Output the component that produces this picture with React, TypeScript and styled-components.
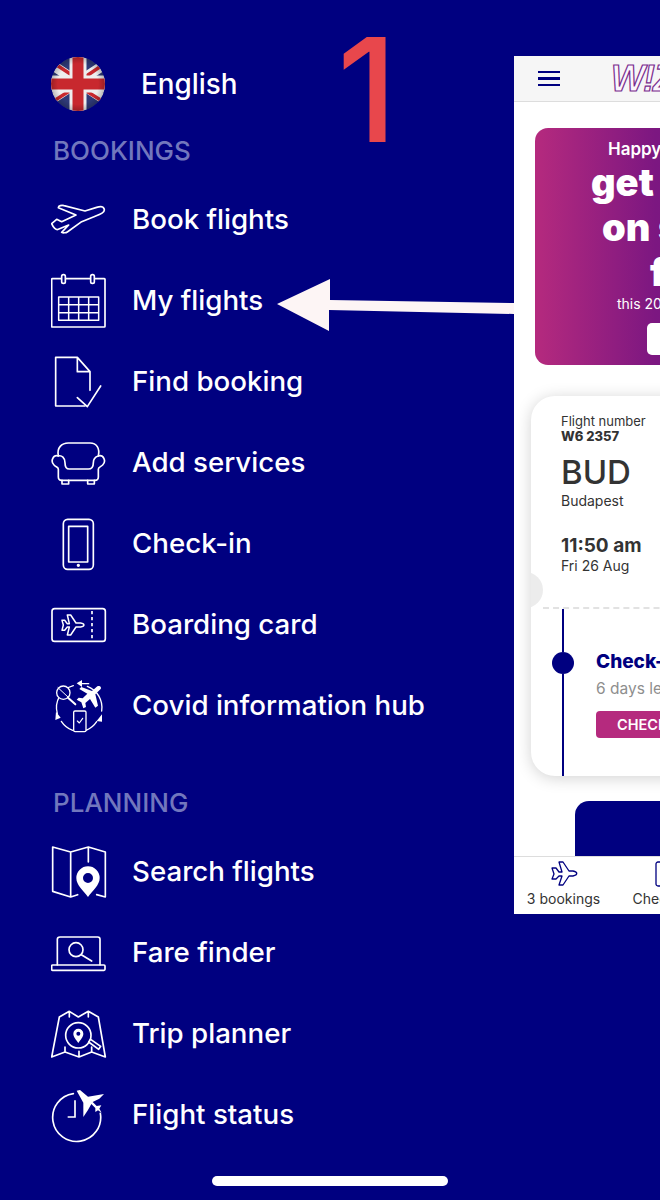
import { FC, ReactNode } from 'react';
import styled, { createGlobalStyle } from 'styled-components';

const GlobalStyle = createGlobalStyle`
	html, body {
		margin: 0;
		padding: 0;
		background: #000080;
	}
	* {
		box-sizing: border-box;
	}
`;

const NAVY = '#000080';
const MAGENTA = '#b52a7e';

interface IIconProps {
	view: string;
	children: ReactNode;
}

// paths are traced at 3x, so every icon is a 168 unit window of that trace
const MenuIcon: FC<IIconProps> = ({ view, children }) => (
	<svg width="56" height="56" viewBox={`${view} 168 168`} fill="none" stroke="#fff" strokeWidth="5" strokeLinejoin="round" strokeLinecap="round">
		{children}
	</svg>
);

const PlaneIcon = () => (
	<MenuIcon view="63 483">
		<path d="M222 533C228 545 205 552 190 558L155 572L112 603C108 606 98 606 95 604L116 582L85 595C78 598 70 590 65 578L80 565L95 572L138 552L85 530C85 524 95 522 102 524L165 540L200 529C210 526 220 527 222 533Z" />
	</MenuIcon>
);

const CalendarIcon = () => (
	<MenuIcon view="63 726">
		<rect x="65" y="743" width="160" height="145" rx="2" />
		<rect x="95" y="731" width="11" height="26" rx="5" fill={NAVY} />
		<rect x="182" y="731" width="11" height="26" rx="5" fill={NAVY} />
		<path d="M86 798H206V868H86ZM86 821H206M86 845H206M116 798V868M146 798V868M176 798V868" strokeWidth="4.5" />
	</MenuIcon>
);

const DocumentIcon = () => (
	<MenuIcon view="63 39">
		<path d="M142 49H77V195H165M180 92V148M142 49L180 92H142Z" />
		<path d="M142 170L172 197L212 135" />
	</MenuIcon>
);

const SofaIcon = () => (
	<MenuIcon view="63 282">
		<path d="M85 345C80 320 95 306 115 306H180C200 306 210 322 205 345" />
		<path d="M85 345C70 340 60 360 72 372C80 380 85 378 85 385V408C85 415 90 418 95 418H195C200 418 205 415 205 408V385C205 378 212 378 218 372C230 360 220 340 205 345C195 348 190 355 190 365C190 378 185 384 175 384H118C108 384 105 375 105 365C105 350 95 342 85 345Z" />
		<path d="M96 418V429H116V418M173 418V429H193V418" />
	</MenuIcon>
);

const PhoneIcon = () => (
	<MenuIcon view="63 525">
		<rect x="100" y="535" width="90" height="150" rx="13" />
		<rect x="116" y="556" width="57" height="107" />
		<circle cx="145" cy="673" r="2.5" fill="#fff" />
	</MenuIcon>
);

const CardIcon = () => (
	<MenuIcon view="63 768">
		<rect x="66" y="803" width="160" height="98" rx="8" />
		<path d="M186 810V895" strokeDasharray="10 8" strokeLinecap="butt" />
		<path d="M96 838H104L112 848H118L112 822H122L138 846H152C165 848 165 856 152 858H138L122 882H112L118 858H112L104 868H96L100 852Z" strokeWidth="4.5" />
	</MenuIcon>
);

const CovidIcon = () => (
	<MenuIcon view="63 1011">
		<path d="M130 1034A68 68 0 0 0 82 1118M94 1141A68 68 0 0 0 128 1168M168 1168A68 68 0 0 0 200 1142M215 1110A68 68 0 0 0 172 1036" strokeWidth="4" />
		<circle cx="100" cy="1055" r="20" strokeWidth="4" fill={NAVY} />
		<path d="M84 1040L116 1070" strokeWidth="3" />
		<path d="M114 1070L136 1090" strokeWidth="6" />
		<path d="M212 1044L196 1060L204 1094L196 1100L180 1074L166 1086L168 1098L160 1102L154 1084L140 1076L146 1070L158 1072L172 1058L148 1044L154 1038L186 1050L202 1036C208 1032 216 1038 212 1044Z" fill="#fff" stroke="none" />
		<path d="M140 1027L156 1017V1038ZM78 1112L92 1130L76 1137ZM216 1120L200 1140L216 1142Z" fill="#fff" stroke="none" />
		<path d="M156 1028H176" strokeWidth="4" />
		<rect x="131" y="1110" width="37" height="62" rx="4" fill={NAVY} strokeWidth="4" />
		<path d="M142 1140L148 1146L158 1132" strokeWidth="3.5" />
	</MenuIcon>
);

const MapPinIcon = () => (
	<MenuIcon view="63 186">
		<path d="M122 210L68 195V328L122 345L143 338M122 210L175 195L226 210V345L200 338M122 210V345M175 195V240" />
		<path fillRule="evenodd" d="M174 345C160 325 139 310 139 288A35 35 0 0 1 209 288C209 310 188 325 174 345ZM174 273A15 15 0 1 0 174 303A15 15 0 1 0 174 273Z" fill="#fff" stroke="none" />
	</MenuIcon>
);

const LaptopIcon = () => (
	<MenuIcon view="63 429">
		<path d="M82 548V472Q82 465 90 465H203Q210 465 210 472V548" />
		<rect x="65" y="549" width="160" height="16" rx="3" />
		<circle cx="138" cy="503" r="21" />
		<path d="M154 518L185 537" />
	</MenuIcon>
);

const TripIcon = () => (
	<MenuIcon view="63 672">
		<path d="M65 825L88 705L118 688L145 705L175 688L205 705L226 825L185 810L147 825L105 810ZM118 688V705M175 688V705M105 810V795M147 825V808M185 810V795" />
		<circle cx="145" cy="760" r="38" fill={NAVY} />
		<path fillRule="evenodd" d="M145 783C138 772 130 765 130 755A15 15 0 0 1 160 755C160 765 152 772 145 783ZM145 749A6 6 0 1 0 145 761A6 6 0 1 0 145 749Z" fill="#fff" stroke="none" />
		<path d="M176 780L182 772L212 793L206 802Z" fill={NAVY} />
	</MenuIcon>
);

const StatusIcon = () => (
	<MenuIcon view="63 915">
		<path d="M130 935A72 72 0 1 0 211 994" />
		<path d="M135 955V1005H113" strokeLinecap="butt" strokeLinejoin="miter" />
		<path d="M140 926L150 924L174 944L222 936L208 950L188 960L200 972L214 970L208 980L215 992L204 985L196 990L196 978L184 966L174 984L160 1005L160 962Z" fill="#fff" stroke="none" />
	</MenuIcon>
);

const FlagBadge = () => (
	<svg width="54" height="54" viewBox="0 0 54 54">
		<defs>
			<clipPath id="flag-clip">
				<circle cx="27" cy="27" r="27" />
			</clipPath>
			<radialGradient id="flag-shade" cx="50%" cy="50%" r="50%">
				<stop offset="75%" stopColor="#000" stopOpacity="0" />
				<stop offset="100%" stopColor="#000" stopOpacity="0.22" />
			</radialGradient>
		</defs>
		<g clipPath="url(#flag-clip)">
			<rect width="54" height="54" fill="#2f3a78" />
			<path d="M-2 6L56 44M-2 44L56 6" stroke="#eee" strokeWidth="10" />
			<path d="M-2 3L24 20M56 47L32 32M-2 47L20 33M56 5L34 20" stroke="#c8282e" strokeWidth="3.5" />
			<path d="M27 0V54M0 27H54" stroke="#eee" strokeWidth="17" />
			<path d="M27 0V54M0 27H54" stroke="#c8282e" strokeWidth="11" />
			<circle cx="27" cy="27" r="27" fill="url(#flag-shade)" />
		</g>
	</svg>
);

const SmallPlane = () => (
	<svg width="28" height="26" viewBox="0 0 28 26" fill="none" stroke={NAVY} strokeWidth="1.3" strokeLinejoin="round">
		<path d="M2 7H6L9 11H12L9 1H13L19 10H23C28 11 28 14 23 15H19L13 24H9L12 15H9L6 18H2L4 13Z" />
	</svg>
);

const SmallPhone = () => (
	<svg width="16" height="26" viewBox="0 0 16 26" fill="none" stroke={NAVY} strokeWidth="1.3">
		<rect x="1" y="1" width="14" height="24" rx="2" />
	</svg>
);

interface IMenuEntry {
	label: string;
	icon: ReactNode;
}

const bookings: IMenuEntry[] = [
	{ label: 'Book flights', icon: <PlaneIcon /> },
	{ label: 'My flights', icon: <CalendarIcon /> },
	{ label: 'Find booking', icon: <DocumentIcon /> },
	{ label: 'Add services', icon: <SofaIcon /> },
	{ label: 'Check-in', icon: <PhoneIcon /> },
	{ label: 'Boarding card', icon: <CardIcon /> },
	{ label: 'Covid information hub', icon: <CovidIcon /> },
];

const planning: IMenuEntry[] = [
	{ label: 'Search flights', icon: <MapPinIcon /> },
	{ label: 'Fare finder', icon: <LaptopIcon /> },
	{ label: 'Trip planner', icon: <TripIcon /> },
	{ label: 'Flight status', icon: <StatusIcon /> },
];

const MenuGroup: FC<{ title: string; entries: IMenuEntry[]; $gap: number }> = ({ title, entries, $gap }) => (
	<>
		<SectionTitle $gap={$gap}>{title}</SectionTitle>
		{entries.map((entry) => (
			<MenuRow key={entry.label}>
				<IconCell>{entry.icon}</IconCell>
				<MenuLabel>{entry.label}</MenuLabel>
			</MenuRow>
		))}
	</>
);

const App: FC = () => (
	<Page>
		<GlobalStyle />
		<Menu>
			<LanguageRow>
				<FlagBadge />
				<LanguageLabel>English</LanguageLabel>
			</LanguageRow>
			<MenuGroup title="BOOKINGS" entries={bookings} $gap={25} />
			<MenuGroup title="PLANNING" entries={planning} $gap={42} />
		</Menu>
		<Preview>
			<PreviewHeader>
				<Hamburger>
					<span />
					<span />
					<span />
				</Hamburger>
				<Logo>W!ZZ</Logo>
			</PreviewHeader>
			<PreviewBody>
				<Promo>
					<PromoSmall $indent={73}>Happy birthday</PromoSmall>
					<PromoBig $indent={56}>get 20% off</PromoBig>
					<PromoBig $indent={67}>on selected</PromoBig>
					<PromoBig $indent={115}>flights</PromoBig>
					<PromoNote $indent={82}>this 2022 summer</PromoNote>
					<PromoButton />
				</Promo>
				<Ticket>
					<Notch />
					<TicketTop>
						<SmallLine>Flight number</SmallLine>
						<FlightCode>W6 2357</FlightCode>
						<Airport>BUD</Airport>
						<City>Budapest</City>
						<Time>11:50 am</Time>
						<DateLine>Fri 26 Aug</DateLine>
					</TicketTop>
					<TicketBottom>
						<Timeline>
							<TimelineLine $height={43} />
							<TimelineDot />
							<TimelineLine />
						</Timeline>
						<StepInfo>
							<StepTitle>Check-in</StepTitle>
							<StepNote>6 days left</StepNote>
							<StepButton>CHECK-IN</StepButton>
						</StepInfo>
					</TicketBottom>
				</Ticket>
				<BigButton />
			</PreviewBody>
			<TabBar>
				<Tab>
					<SmallPlane />
					<TabLabel>3 bookings</TabLabel>
				</Tab>
				<Tab>
					<SmallPhone />
					<TabLabel>Check-in</TabLabel>
				</Tab>
			</TabBar>
		</Preview>
		<StepNumber>1</StepNumber>
		<ArrowMark width="240" height="60" viewBox="275 275 240 60">
			<path d="M277 304L330 279V300L514 303V314L329 310V331Z" fill="#fdf5f5" />
		</ArrowMark>
		<HomeIndicator />
	</Page>
);

export default App;

const Page = styled.div`
	position: relative;
	display: flex;
	align-items: flex-start;
	width: 660px;
	height: 1200px;
	overflow: hidden;
	background: #000080;
	font-family: Inter, "Liberation Sans", sans-serif;
	color: #fff;
`;

const Menu = styled.nav`
	flex: 0 0 514px;
	padding: 57px 0 0 51px;
`;

const LanguageRow = styled.div`
	display: flex;
	align-items: center;
	height: 54px;
`;

const LanguageLabel = styled.span`
	margin-left: 36px;
	font-size: 27.8px;
	font-weight: 500;
`;

const SectionTitle = styled.h2<{ $gap: number }>`
	margin: ${(p) => p.$gap}px 0 12px 2px;
	height: 31px;
	line-height: 29px;
	font-size: 26px;
	font-weight: 500;
	color: #7277bd;
`;

const MenuRow = styled.div`
	display: flex;
	align-items: center;
	height: 81px;
`;

const IconCell = styled.div`
	display: flex;
	flex: 0 0 81px;
`;

const MenuLabel = styled.span`
	padding-bottom: 2px;
	font-size: 27.7px;
	font-weight: 500;
	white-space: nowrap;
`;

const Preview = styled.section`
	display: flex;
	flex: 0 0 480px;
	flex-direction: column;
	height: 858px;
	margin-top: 56px;
	background: #fff;
	color: #333;
`;

const PreviewHeader = styled.header`
	display: flex;
	align-items: center;
	height: 46px;
	padding-left: 24px;
	background: #f6f6f6;
	border-bottom: 1px solid #ddd;
`;

const Hamburger = styled.div`
	display: flex;
	flex-direction: column;
	gap: 4px;
	width: 22px;

	span {
		height: 2.5px;
		background: #000080;
	}
`;

const Logo = styled.span`
	margin-left: 51px;
	font-family: "Liberation Sans", sans-serif;
	font-size: 36px;
	font-weight: 700;
	font-style: italic;
	letter-spacing: -2px;
	color: #fbf6fb;
	-webkit-text-stroke: 1.2px #7a2d8e;
`;

const PreviewBody = styled.div`
	flex: 1;
	overflow: hidden;
	padding: 26px 0 0 17px;
`;

const Promo = styled.div`
	width: 430px;
	height: 237px;
	margin-left: 4px;
	padding-top: 10px;
	border-radius: 13px;
	background: linear-gradient(90deg, ${MAGENTA} 0%, #7c1781 28%, #4a0d80 100%);
	color: #fff;
`;

const PromoLine = styled.div<{ $indent: number }>`
	padding-left: ${(p) => p.$indent}px;
	white-space: nowrap;
`;

const PromoSmall = styled(PromoLine)`
	height: 22px;
	line-height: 22px;
	font-size: 17px;
	font-weight: 600;
`;

const PromoBig = styled(PromoLine)`
	height: 45px;
	line-height: 45px;
	font-size: 38px;
	font-weight: 900;
`;

const PromoNote = styled(PromoLine)`
	height: 18px;
	line-height: 18px;
	font-size: 14px;
`;

const PromoButton = styled.div`
	width: 120px;
	height: 32px;
	margin: 10px 0 0 112px;
	border-radius: 5px;
	background: #fff;
`;

const Ticket = styled.div`
	position: relative;
	width: 440px;
	height: 380px;
	margin-top: 31px;
	overflow: hidden;
	border-radius: 24px;
	background: #fff;
	box-shadow: 0 2px 16px rgba(0, 0, 0, 0.18);
`;

const Notch = styled.div`
	position: absolute;
	top: 176px;
	left: -24px;
	width: 36px;
	height: 36px;
	border-radius: 50%;
	background: #ececec;
`;

const TicketTop = styled.div`
	height: 213px;
	margin-left: 12px;
	padding: 17px 0 0 18px;
	border-bottom: 2px dashed #e2e2e2;
`;

const SmallLine = styled.div`
	height: 16px;
	line-height: 16px;
	font-size: 13px;
`;

const FlightCode = styled.div`
	height: 14px;
	line-height: 14px;
	font-size: 13px;
	font-weight: 800;
`;

const Airport = styled.div`
	height: 40px;
	margin-top: 9px;
	line-height: 40px;
	font-size: 33px;
	font-weight: 500;
`;

const City = styled.div`
	height: 18px;
	line-height: 18px;
	font-size: 14px;
`;

const Time = styled.div`
	height: 22px;
	margin-top: 25px;
	line-height: 22px;
	font-size: 19px;
	font-weight: 700;
`;

const DateLine = styled.div`
	height: 18px;
	line-height: 18px;
	font-size: 14px;
`;

const TicketBottom = styled.div`
	display: flex;
	height: 167px;
`;

const Timeline = styled.div`
	display: flex;
	flex: 0 0 22px;
	flex-direction: column;
	align-items: center;
	margin-left: 21px;
`;

const TimelineLine = styled.div<{ $height?: number }>`
	flex: ${(p) => (p.$height ? `0 0 ${p.$height}px` : '1')};
	width: 2px;
	background: #000080;
`;

const TimelineDot = styled.div`
	flex: 0 0 22px;
	border-radius: 50%;
	width: 22px;
	background: #000080;
`;

const StepInfo = styled.div`
	margin-left: 22px;
	padding-top: 41px;
`;

const StepTitle = styled.div`
	height: 24px;
	line-height: 24px;
	font-size: 19px;
	font-weight: 800;
	color: #000080;
`;

const StepNote = styled.div`
	height: 20px;
	margin-top: 5px;
	line-height: 20px;
	font-size: 15.5px;
	color: #8e8e8e;
`;

const StepButton = styled.div`
	width: 140px;
	height: 27px;
	margin-top: 12px;
	padding-left: 21px;
	line-height: 27px;
	border-radius: 4px;
	background: ${MAGENTA};
	font-size: 14.5px;
	font-weight: 600;
	color: #fff;
`;

const BigButton = styled.div`
	width: 380px;
	height: 55px;
	margin: 25px 0 0 44px;
	border-radius: 14px 14px 0 0;
	background: #000080;
`;

const TabBar = styled.div`
	display: flex;
	height: 58px;
	padding-top: 4px;
	border-top: 1px solid #ddd;
	background: #fff;
`;

const Tab = styled.div`
	display: flex;
	flex: 0 0 99px;
	flex-direction: column;
	align-items: center;
	gap: 3px;
`;

const TabLabel = styled.span`
	font-size: 14px;
	line-height: 17px;
	white-space: nowrap;
`;

const StepNumber = styled.div`
	position: absolute;
	top: 10px;
	left: 337px;
	font-size: 145px;
	line-height: 160px;
	font-weight: 500;
	color: #e8474c;
`;

const ArrowMark = styled.svg`
	position: absolute;
	top: 275px;
	left: 275px;
`;

const HomeIndicator = styled.div`
	position: absolute;
	left: 212px;
	bottom: 14px;
	width: 236px;
	height: 10px;
	border-radius: 5px;
	background: #fff;
`;
